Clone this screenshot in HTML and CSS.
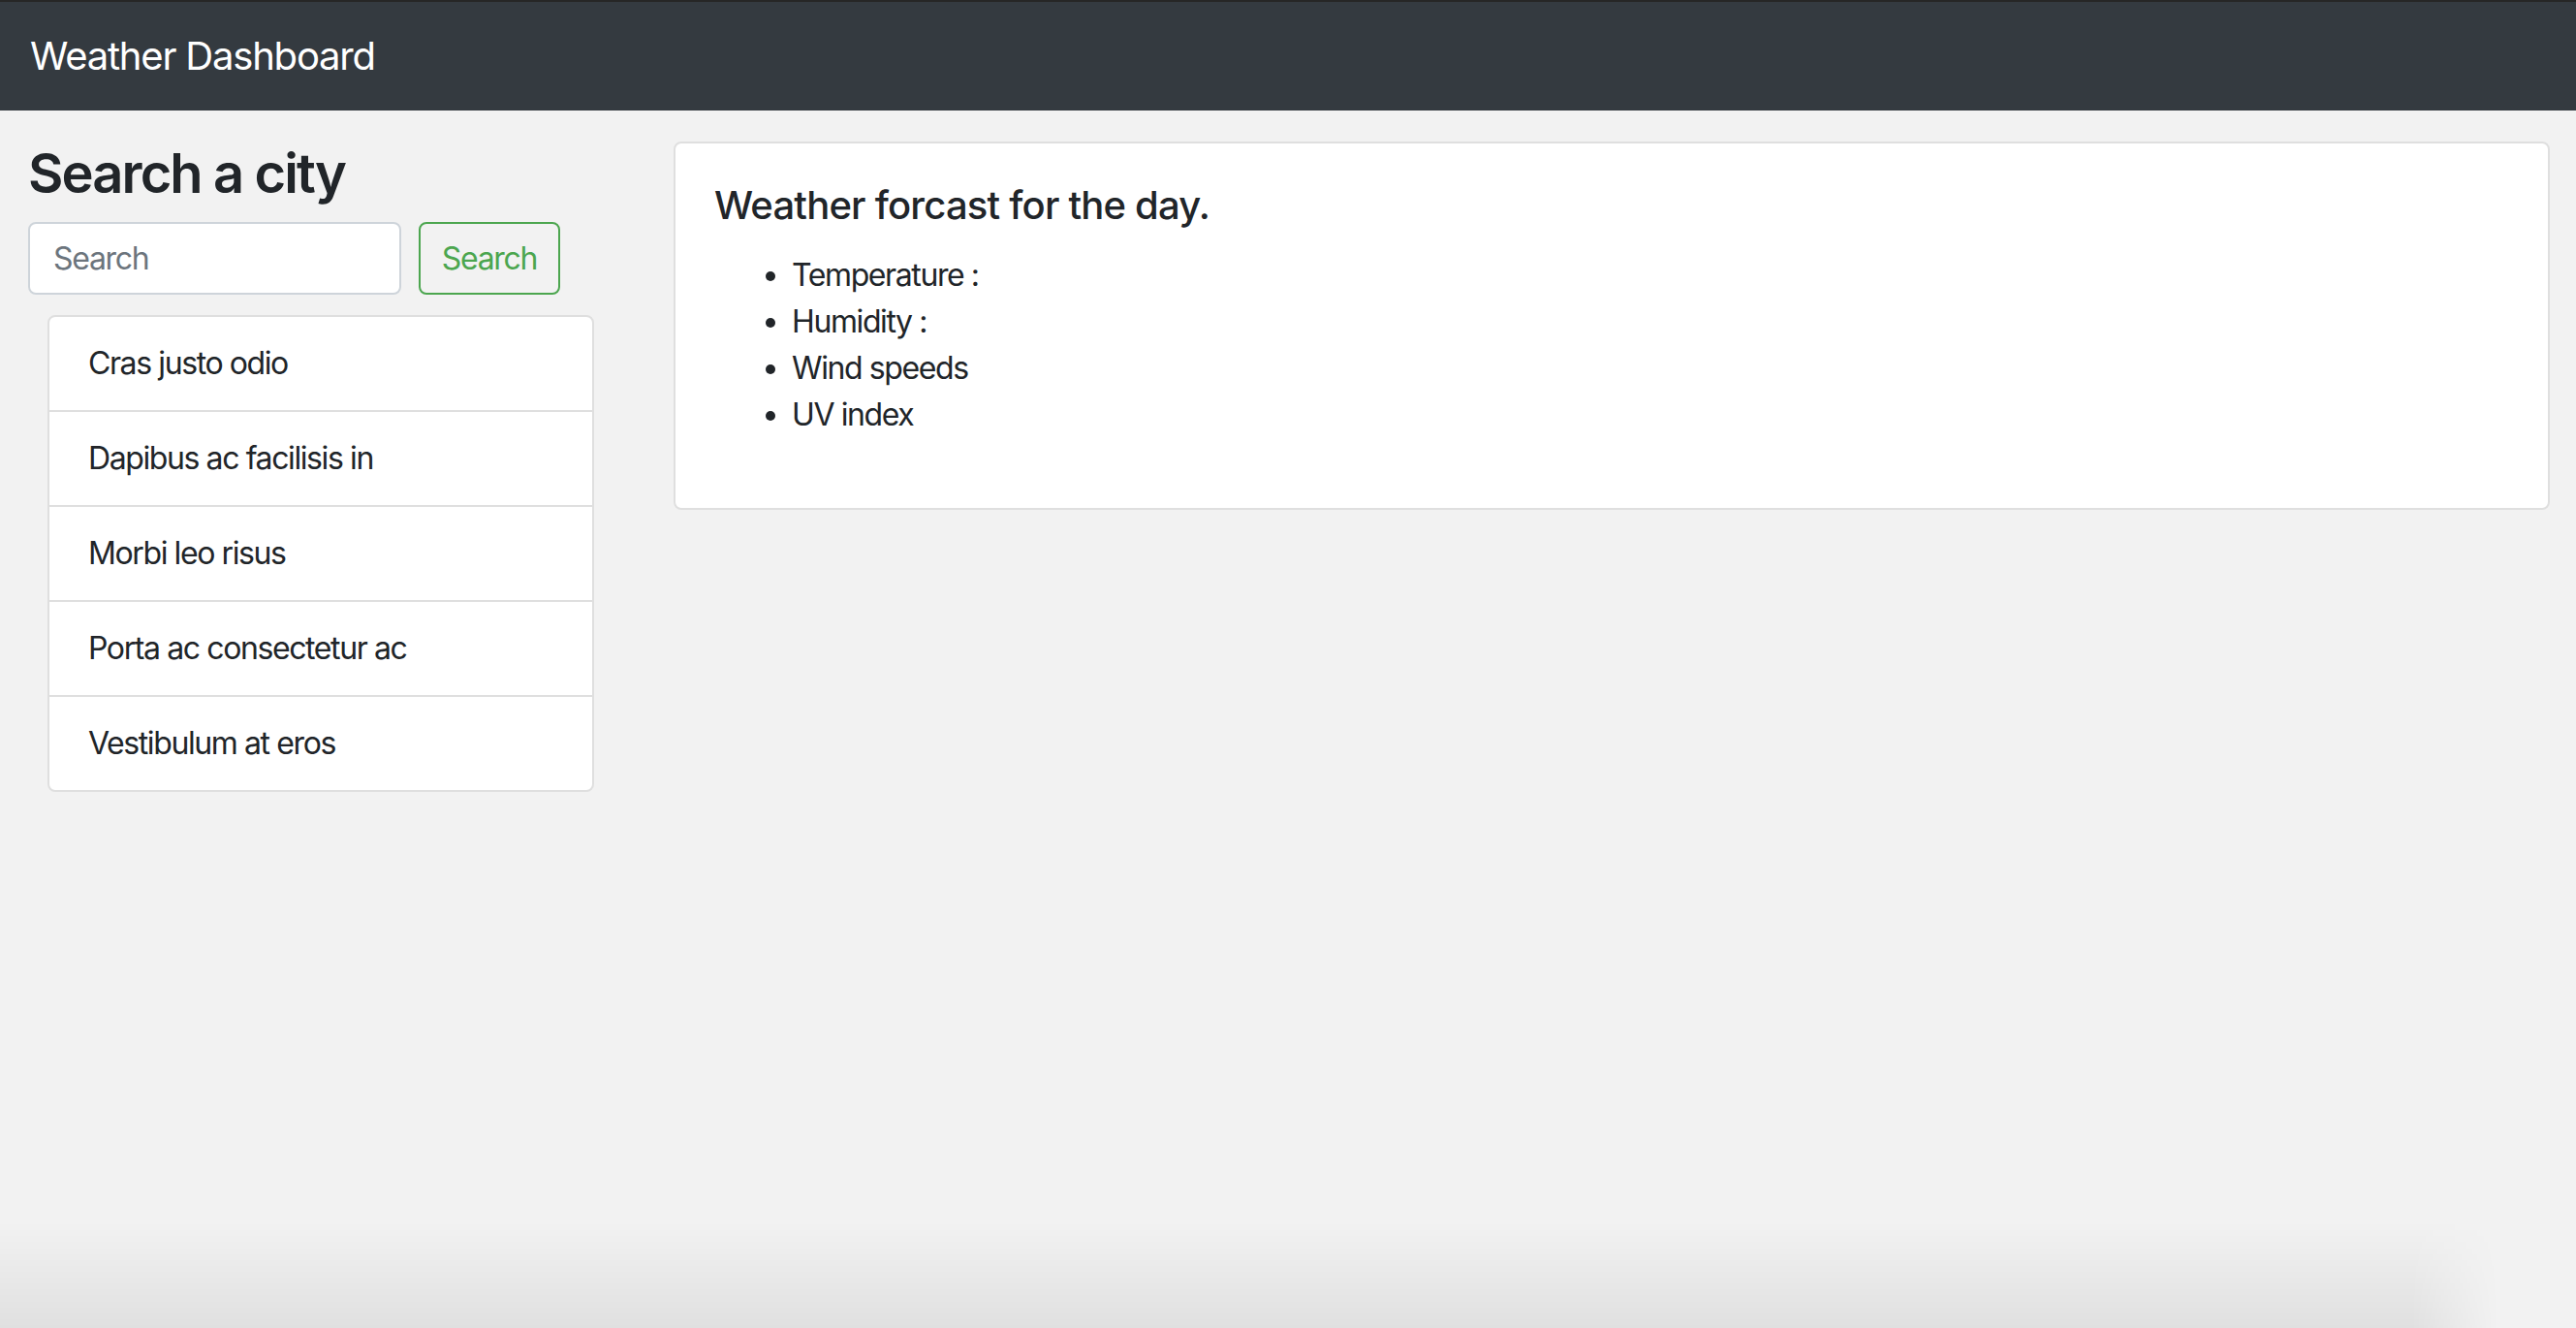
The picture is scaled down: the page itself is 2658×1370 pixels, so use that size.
FILE: index.html
```html
<!DOCTYPE html>
<html lang="en">
<head>
<meta charset="utf-8">
<title>Weather Dashboard</title>
<link rel="stylesheet" href="styles.css">
</head>
<body>
<nav class="navbar">
  <span class="brand">Weather Dashboard</span>
</nav>
<main class="page">
  <aside class="sidebar">
    <h3 class="side-title">Search a city</h3>
    <form class="search-form">
      <input class="search-input" type="search" placeholder="Search">
      <button class="search-btn" type="button">Search</button>
    </form>
    <ul class="city-list">
      <li class="city-item">Cras justo odio</li>
      <li class="city-item">Dapibus ac facilisis in</li>
      <li class="city-item">Morbi leo risus</li>
      <li class="city-item">Porta ac consectetur ac</li>
      <li class="city-item">Vestibulum at eros</li>
    </ul>
  </aside>
  <section class="content">
    <div class="card">
      <h5 class="card-title">Weather forcast for the day.</h5>
      <ul class="stats">
        <li>Temperature :</li>
        <li>Humidity :</li>
        <li>Wind speeds</li>
        <li>UV index</li>
      </ul>
    </div>
  </section>
</main>
<div class="bottom-shade"></div>
</body>
</html>
```

FILE: styles.css
```css
* { box-sizing: border-box; }
html, body { margin: 0; padding: 0; }
body {
  background: #f2f2f2;
  color: #212529;
  font-family: Inter, "Noto Sans", "Liberation Sans", sans-serif;
  font-size: 32px;
  line-height: 1.5;
  min-height: 1370px;
}
.navbar {
  background: #343a40;
  border-top: 2px solid #262626;
  height: 114px;
  padding: 0 31px;
  display: flex;
  align-items: center;
}
.brand {
  color: #fff;
  font-size: 40px;
  line-height: 60px;
  letter-spacing: -1.2px;
}
.page {
  display: grid;
  grid-template-columns: 664px 1fr;
}
.sidebar {
  padding: 32px 30px 0 29px;
}
.side-title {
  margin: 0 0 16px 0;
  font-size: 56px;
  font-weight: 600;
  line-height: 1.2;
  letter-spacing: -1.9px;
}
.search-form {
  display: flex;
  gap: 18px;
  align-items: center;
}
.search-input {
  width: 385px;
  height: 75px;
  border: 2px solid #ced4da;
  border-radius: 8px;
  background: #fff;
  padding: 12px 24px;
  font-family: inherit;
  font-size: 32px;
  color: #495057;
  outline: none;
  letter-spacing: -1.3px;
}
.search-input::placeholder { color: #6c757d; }
.search-btn {
  height: 75px;
  width: 146px;
  border: 2px solid #4ca64f;
  border-radius: 8px;
  background: transparent;
  color: #4ca64f;
  font-family: inherit;
  font-size: 32px;
  padding: 0;
  letter-spacing: -1.3px;
}
.city-list {
  list-style: none;
  margin: 21px 0 0 20px;
  padding: 0;
  width: 564px;
  background: #fff;
  border: 2px solid #dfdfdf;
  border-radius: 8px;
}
.city-item {
  padding: 24px 40px;
  line-height: 48px;
  border-top: 2px solid #dfdfdf;
  letter-spacing: -1.4px;
}
.city-item:first-child { border-top: none; }
.content {
  padding: 32px 27px 0 31px;
}
.card {
  background: #fff;
  border: 2px solid #dfdfdf;
  border-radius: 8px;
  padding: 40px 40px 40px 40px;
}
.card-title {
  margin: 0 0 24px 0;
  font-size: 40px;
  font-weight: 500;
  line-height: 1.2;
  letter-spacing: -0.8px;
}
.stats {
  margin: 0 0 32px 0;
  padding-left: 80px;
  letter-spacing: -1.4px;
}
.stats li { line-height: 48px; }
.bottom-shade {
  position: fixed;
  left: 0;
  right: 0;
  bottom: 0;
  height: 110px;
  background: linear-gradient(to bottom, rgba(0,0,0,0), rgba(0,0,0,0.07));
  -webkit-mask-image: linear-gradient(to right, #000 0, #000 calc(100% - 170px), transparent calc(100% - 80px));
  mask-image: linear-gradient(to right, #000 0, #000 calc(100% - 170px), transparent calc(100% - 80px));
  pointer-events: none;
}
```
